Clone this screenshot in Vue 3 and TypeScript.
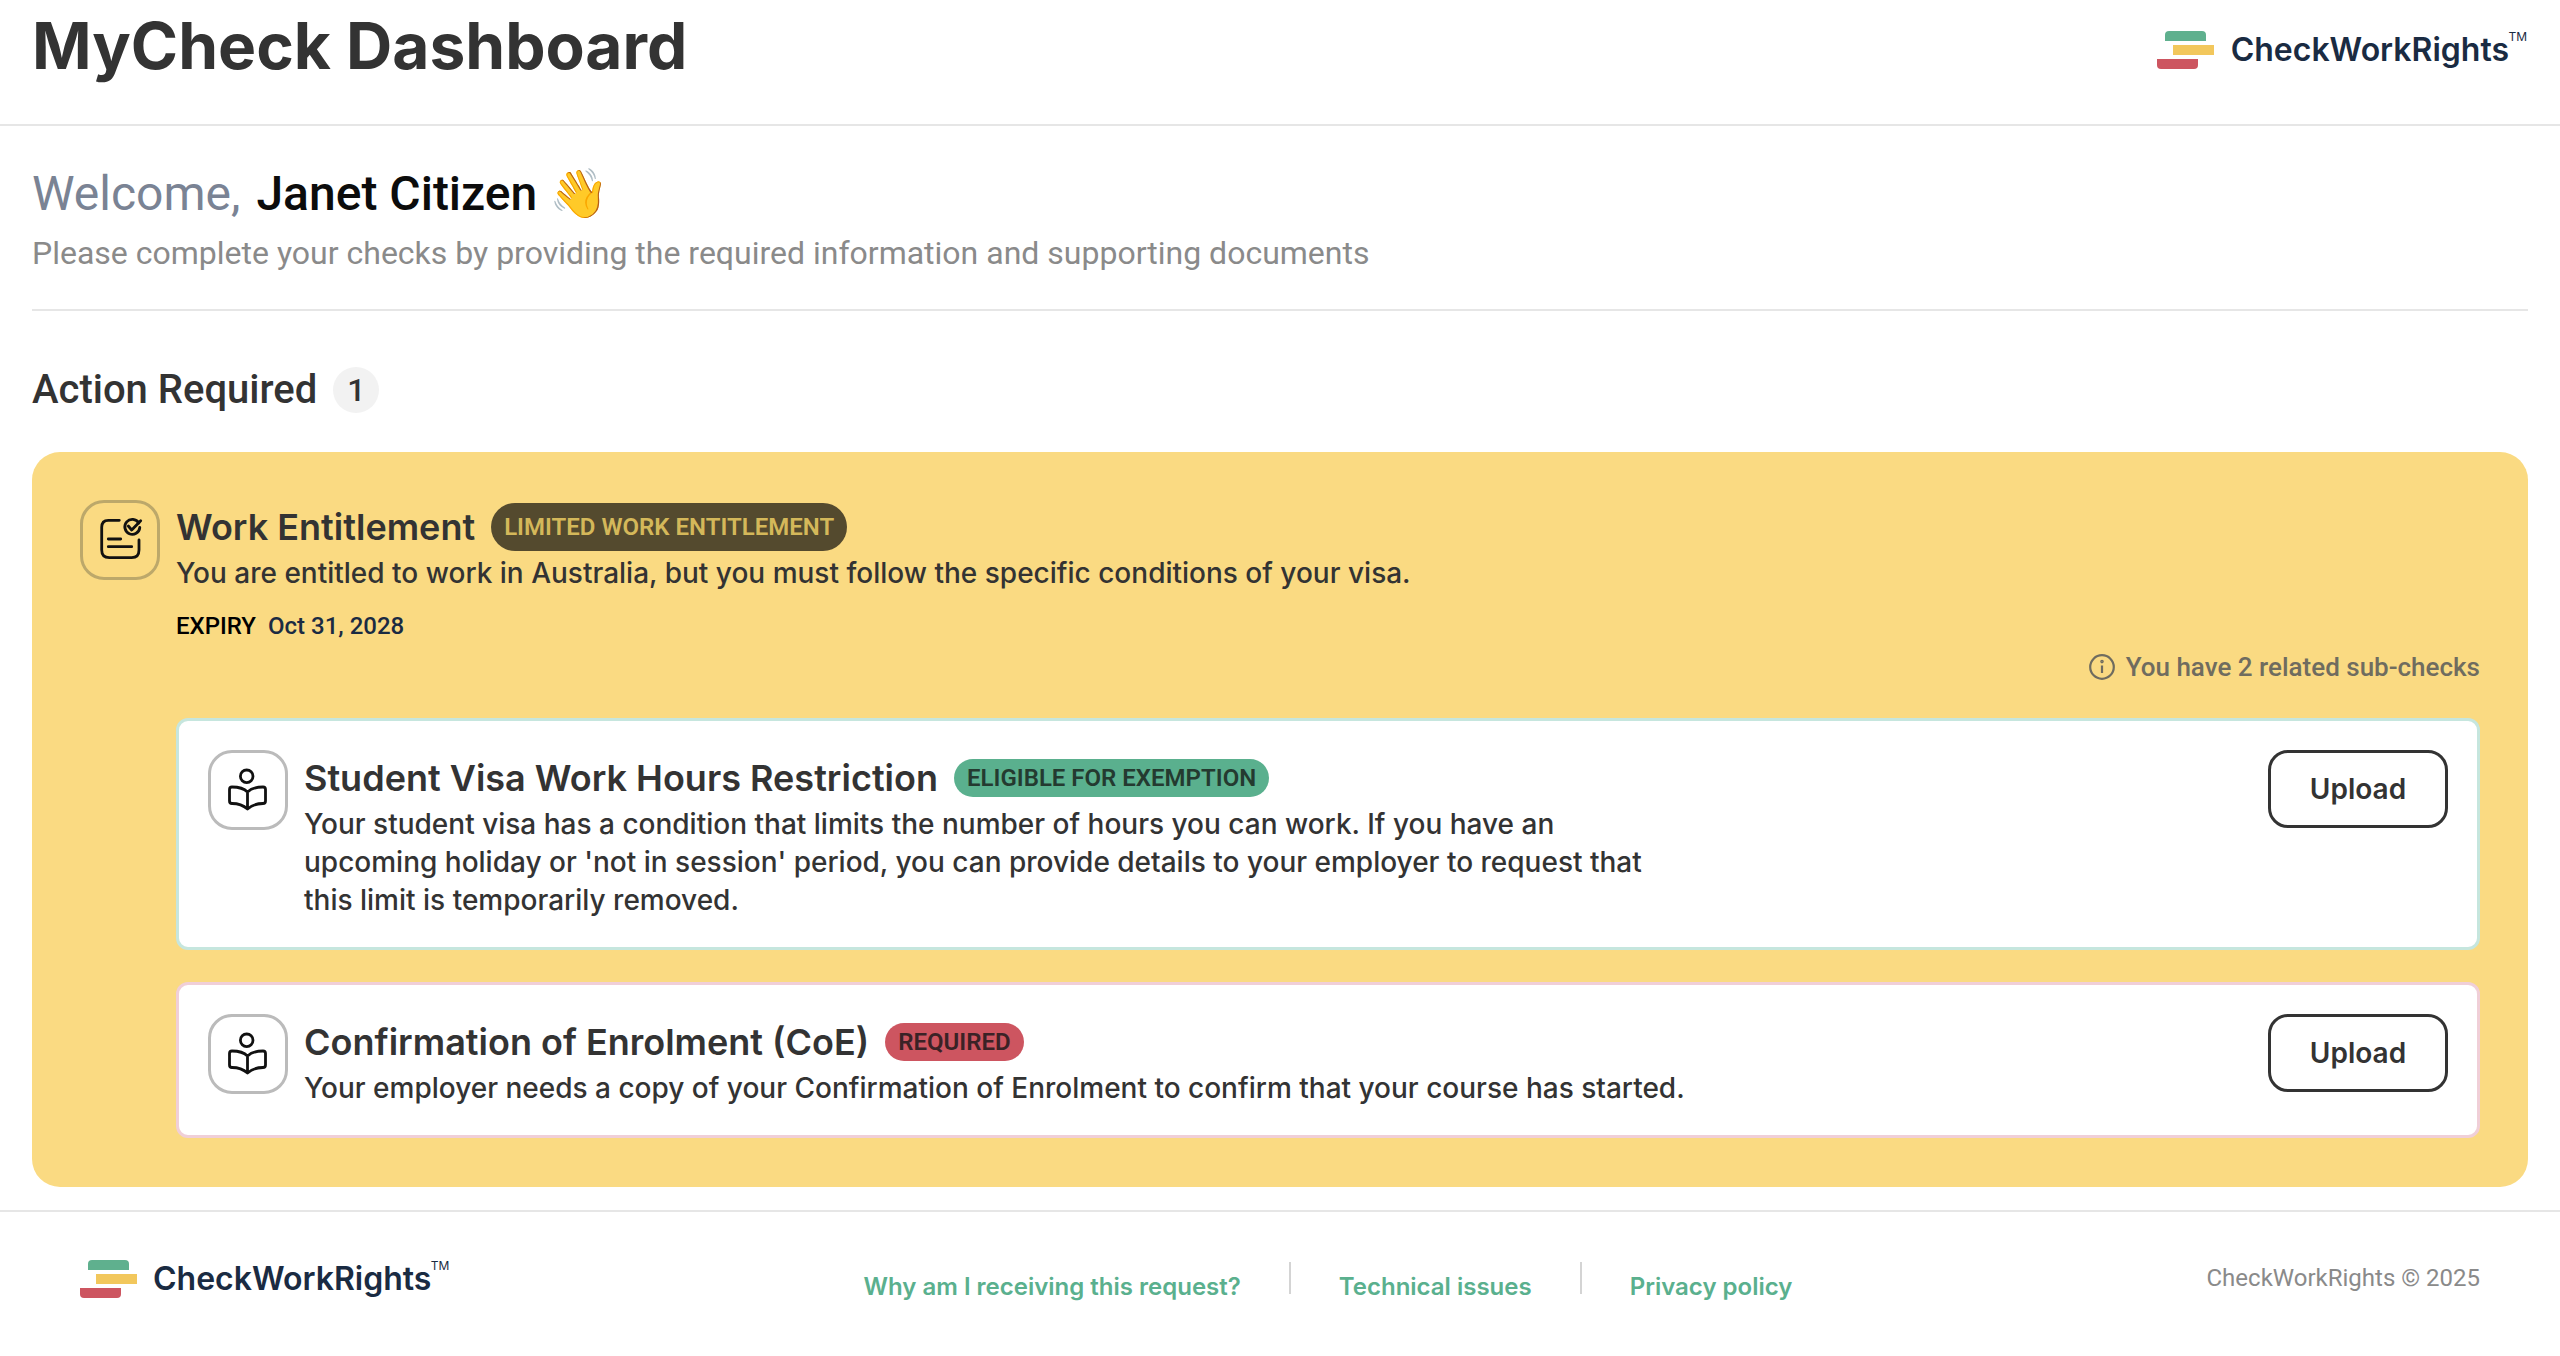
<script setup lang="ts">
interface SubCheck {
  title: string
  badge: string
  badgeClass: string
  cardClass: string
  lines: string
}

const subChecks: SubCheck[] = [
  {
    title: 'Student Visa Work Hours Restriction',
    badge: 'ELIGIBLE FOR EXEMPTION',
    badgeClass: 'badge-green',
    cardClass: 'sub-green',
    lines:
      "Your student visa has a condition that limits the number of hours you can work. If you have an upcoming holiday or 'not in session' period, you can provide details to your employer to request that this limit is temporarily removed."
  },
  {
    title: 'Confirmation of Enrolment (CoE)',
    badge: 'REQUIRED',
    badgeClass: 'badge-red',
    cardClass: 'sub-red',
    lines: 'Your employer needs a copy of your Confirmation of Enrolment to confirm that your course has started.'
  }
]

const footerLinks: string[] = ['Why am I receiving this request?', 'Technical issues', 'Privacy policy']
</script>

<template>
  <div class="page">
    <header class="top">
      <h1 class="title">MyCheck Dashboard</h1>
      <div class="logo">
        <svg class="logo-mark" width="58" height="38" viewBox="0 0 58 38">
          <path d="M8 10V4a4 4 0 0 1 4-4h33a4 4 0 0 1 4 4v6z" fill="#5fb08e" />
          <rect x="16" y="14" width="41" height="10" fill="#f2c75c" />
          <path d="M0 28h41v6a4 4 0 0 1-4 4H4a4 4 0 0 1-4-4z" fill="#cd5560" />
        </svg>
        <span class="logo-text">CheckWorkRights<sup class="tm">TM</sup></span>
      </div>
    </header>

    <main class="main">
      <section class="welcome">
        <h2 class="greet"><span class="greet-muted">Welcome,</span> <span class="greet-name">Janet Citizen</span> <span class="wave">👋</span></h2>
        <p class="lead">Please complete your checks by providing the required information and supporting documents</p>
      </section>

      <div class="section-head">
        <h3 class="section-title">Action Required</h3>
        <span class="count">1</span>
      </div>

      <section class="card">
        <div class="card-head">
          <div class="icon-box icon-box-yellow">
            <svg width="74" height="74" viewBox="3 3 74 74" fill="none" stroke="#111" stroke-width="2.8" stroke-linecap="round" stroke-linejoin="round">
              <path d="M39.3 20.3H28.3Q21.7 20.3 21.7 27.3V50Q21.7 57.6 29.3 57.6H51.7Q59 57.6 59 50V40" />
              <path d="M58.8 23A7.5 7.5 0 1 0 59.8 27.5" />
              <path d="M48.3 26L51.7 30L60.7 20.7" />
              <path d="M28.3 39H40.7M28.3 46.7H51.7" />
            </svg>
          </div>
          <div class="card-copy">
            <div class="title-row title-row-main">
              <h4 class="check-title">Work Entitlement</h4>
              <span class="badge badge-dark">LIMITED WORK ENTITLEMENT</span>
            </div>
            <p class="check-text">You are entitled to work in Australia, but you must follow the specific conditions of your visa.</p>
            <p class="expiry"><span class="expiry-label">EXPIRY</span><span class="expiry-date">Oct 31, 2028</span></p>
          </div>
        </div>

        <div class="related">
          <svg width="26" height="26" viewBox="0 0 26 26" fill="none" stroke="#6f6c5f" stroke-width="2.2">
            <circle cx="13" cy="13" r="11.8" />
            <path d="M13 11.5V19" />
            <circle cx="13" cy="7.6" r="0.7" />
          </svg>
          <span>You have 2 related sub-checks</span>
        </div>

        <div class="subs">
          <article v-for="sub in subChecks" :key="sub.title" class="sub" :class="sub.cardClass">
            <div class="icon-box icon-box-white">
              <svg width="74" height="74" viewBox="3 3 74 74" fill="none" stroke="#111" stroke-width="2.8" stroke-linecap="round" stroke-linejoin="round">
                <circle cx="38.7" cy="26.3" r="6.3" />
                <path d="M39.5 42C36 38.5 29 37 24 37Q21.5 37 21.5 39.5V51Q21.5 53.5 24 53.5C30 53.5 35 55 39.5 59C44 55 49 53.5 55 53.5Q57.5 53.5 57.5 51V39.5Q57.5 37 55 37C50 37 43 38.5 39.5 42V59" />
              </svg>
            </div>
            <div class="sub-copy">
              <div class="title-row title-row-sub">
                <h4 class="check-title">{{ sub.title }}</h4>
                <span class="badge badge-small" :class="sub.badgeClass">{{ sub.badge }}</span>
              </div>
              <p class="check-text sub-text">{{ sub.lines }}</p>
            </div>
            <button class="upload" type="button">Upload</button>
          </article>
        </div>
      </section>
    </main>

    <footer class="foot">
      <div class="logo foot-logo">
        <svg class="logo-mark" width="58" height="38" viewBox="0 0 58 38">
          <path d="M8 10V4a4 4 0 0 1 4-4h33a4 4 0 0 1 4 4v6z" fill="#5fb08e" />
          <rect x="16" y="14" width="41" height="10" fill="#f2c75c" />
          <path d="M0 28h41v6a4 4 0 0 1-4 4H4a4 4 0 0 1-4-4z" fill="#cd5560" />
        </svg>
        <span class="logo-text">CheckWorkRights<sup class="tm">TM</sup></span>
      </div>
      <nav class="foot-links">
        <a v-for="link in footerLinks" :key="link" class="foot-link" href="#">{{ link }}</a>
      </nav>
      <span class="copy">CheckWorkRights © 2025</span>
    </footer>
  </div>
</template>

<style>
html, body { background: #fff; }
</style>

<style scoped>
.page {
  width: 2560px;
  height: 1356px;
  overflow: hidden;
  font-family: Inter, "Liberation Sans", sans-serif;
  color: #333;
  background: #fff;
}
h1, h2, h3, h4, p { margin: 0; }

.top {
  height: 126px;
  box-sizing: border-box;
  border-bottom: 2px solid #e6e6e6;
  padding: 0 32px 0 32px;
  display: flex;
  justify-content: space-between;
}
.title {
  font-size: 64px;
  line-height: 92px;
  font-weight: 700;
  color: #333;
}
.top .logo { margin: 31px 1px 0 0; align-self: flex-start; }

.logo { display: flex; align-items: flex-start; gap: 16px; }
.logo-mark { flex: none; }
.logo-text {
  font-size: 32px;
  line-height: 38px;
  font-weight: 600;
  color: #1a2b42;
  white-space: nowrap;
  position: relative;
  padding-right: 18px;
}
.tm {
  position: absolute;
  right: 0;
  top: -1px;
  font-size: 12px;
  line-height: 14px;
  font-weight: 400;
}

.main { padding: 0 32px; }
.welcome {
  padding: 38px 0 35px;
  border-bottom: 2px solid #e6e6e6;
}
.greet {
  font-family: Roboto, sans-serif;
  font-size: 48px;
  line-height: 60px;
  font-weight: 500;
}
.greet-muted { color: #7a8394; font-weight: 400; }
.greet-name { color: #0c0c0c; margin-left: 4px; }
.wave { font-size: 48px; line-height: 48px; }
.lead {
  margin-top: 8px;
  font-family: Roboto, sans-serif;
  font-size: 32px;
  line-height: 42px;
  color: #8a8a8a;
}

.section-head {
  display: flex;
  align-items: center;
  gap: 16px;
  margin-top: 56px;
  height: 46px;
}
.section-title {
  font-family: Roboto, sans-serif;
  font-size: 40px;
  line-height: 46px;
  font-weight: 500;
  color: #333;
}
.count {
  width: 46px;
  height: 46px;
  border-radius: 50%;
  background: #f2f2f2;
  display: flex;
  align-items: center;
  justify-content: center;
  font-family: Roboto, sans-serif;
  font-weight: 500;
  font-size: 32px;
}

.card {
  margin-top: 39px;
  background: #fada82;
  border-radius: 28px;
  padding: 48px;
  height: 735px;
  box-sizing: border-box;
}
.card-head { display: flex; gap: 16px; }
.icon-box {
  width: 80px;
  height: 80px;
  box-sizing: border-box;
  border-radius: 24px;
  border: 3px solid #bbb;
  display: flex;
  flex: none;
  align-items: center;
  justify-content: center;
  background: #fff;
}
.icon-box-yellow { background: transparent; border-color: #bca86a; }
.title-row { display: flex; align-items: center; gap: 16px; }
.title-row-main { height: 54px; }
.title-row-sub { height: 50px; margin-top: 3px; margin-bottom: 2px; }
.check-title {
  font-size: 36px;
  line-height: 46px;
  font-weight: 600;
  color: #333;
  white-space: nowrap;
}
.badge {
  display: inline-flex;
  align-items: center;
  height: 48px;
  padding: 0 13px;
  border-radius: 24px;
  font-family: Roboto, sans-serif;
  font-size: 24px;
  font-weight: 600;
  white-space: nowrap;
}
.badge-small { height: 38px; border-radius: 19px; }
.badge-dark { background: #544a2e; color: #d4b85a; }
.badge-green { background: #5ab08e; color: #243a30; }
.badge-red { background: #cd5560; color: #3a2226; }
.check-text {
  font-size: 28px;
  line-height: 38px;
  color: #333;
  font-weight: 500;
}
.expiry {
  margin-top: 19px;
  font-family: Roboto, sans-serif;
  font-size: 24px;
  line-height: 30px;
  font-weight: 500;
  color: #000;
}
.expiry-date { margin-left: 12px; color: #1a2b42; }

.related {
  display: flex;
  align-items: center;
  justify-content: flex-end;
  gap: 11px;
  margin-top: 11px;
  height: 30px;
  font-family: Roboto, sans-serif;
  font-weight: 500;
  font-size: 26px;
  color: #6f6c5f;
}

.subs {
  margin-top: 36px;
  margin-left: 96px;
  display: flex;
  flex-direction: column;
  gap: 32px;
}
.sub {
  background: #fff;
  border-radius: 12px;
  border: 3px solid #c6e6de;
  padding: 29px 29px 28px;
  display: flex;
  gap: 16px;
}
.sub-red { border-color: #f0cfd8; }
.sub-copy { flex: 1; min-width: 0; }
.sub-green .sub-text { max-width: 1350px; }
.upload {
  flex: none;
  margin-left: auto;
  width: 180px;
  height: 78px;
  border: 3px solid #333;
  border-radius: 20px;
  background: #fff;
  font-family: Inter, sans-serif;
  font-size: 28px;
  font-weight: 600;
  color: #333;
}

.foot {
  margin-top: 23px;
  border-top: 2px solid #e6e6e6;
  padding: 50px 80px 0;
  display: flex;
  align-items: flex-start;
  justify-content: space-between;
}
.foot-logo { margin-top: -2px; gap: 15px; }
.foot-links { display: flex; }
.foot-link {
  font-size: 24px;
  font-weight: 600;
  line-height: 32px;
  color: #5ab08e;
  text-decoration: none;
  padding: 9px 48px 0;
  border-left: 2px solid #d4d4d4;
  height: 23px;
}
.foot-link:first-child { border-left: none; }
.copy {
  font-family: Roboto, sans-serif;
  font-size: 24px;
  line-height: 32px;
  color: #8a8a8a;
}
</style>
